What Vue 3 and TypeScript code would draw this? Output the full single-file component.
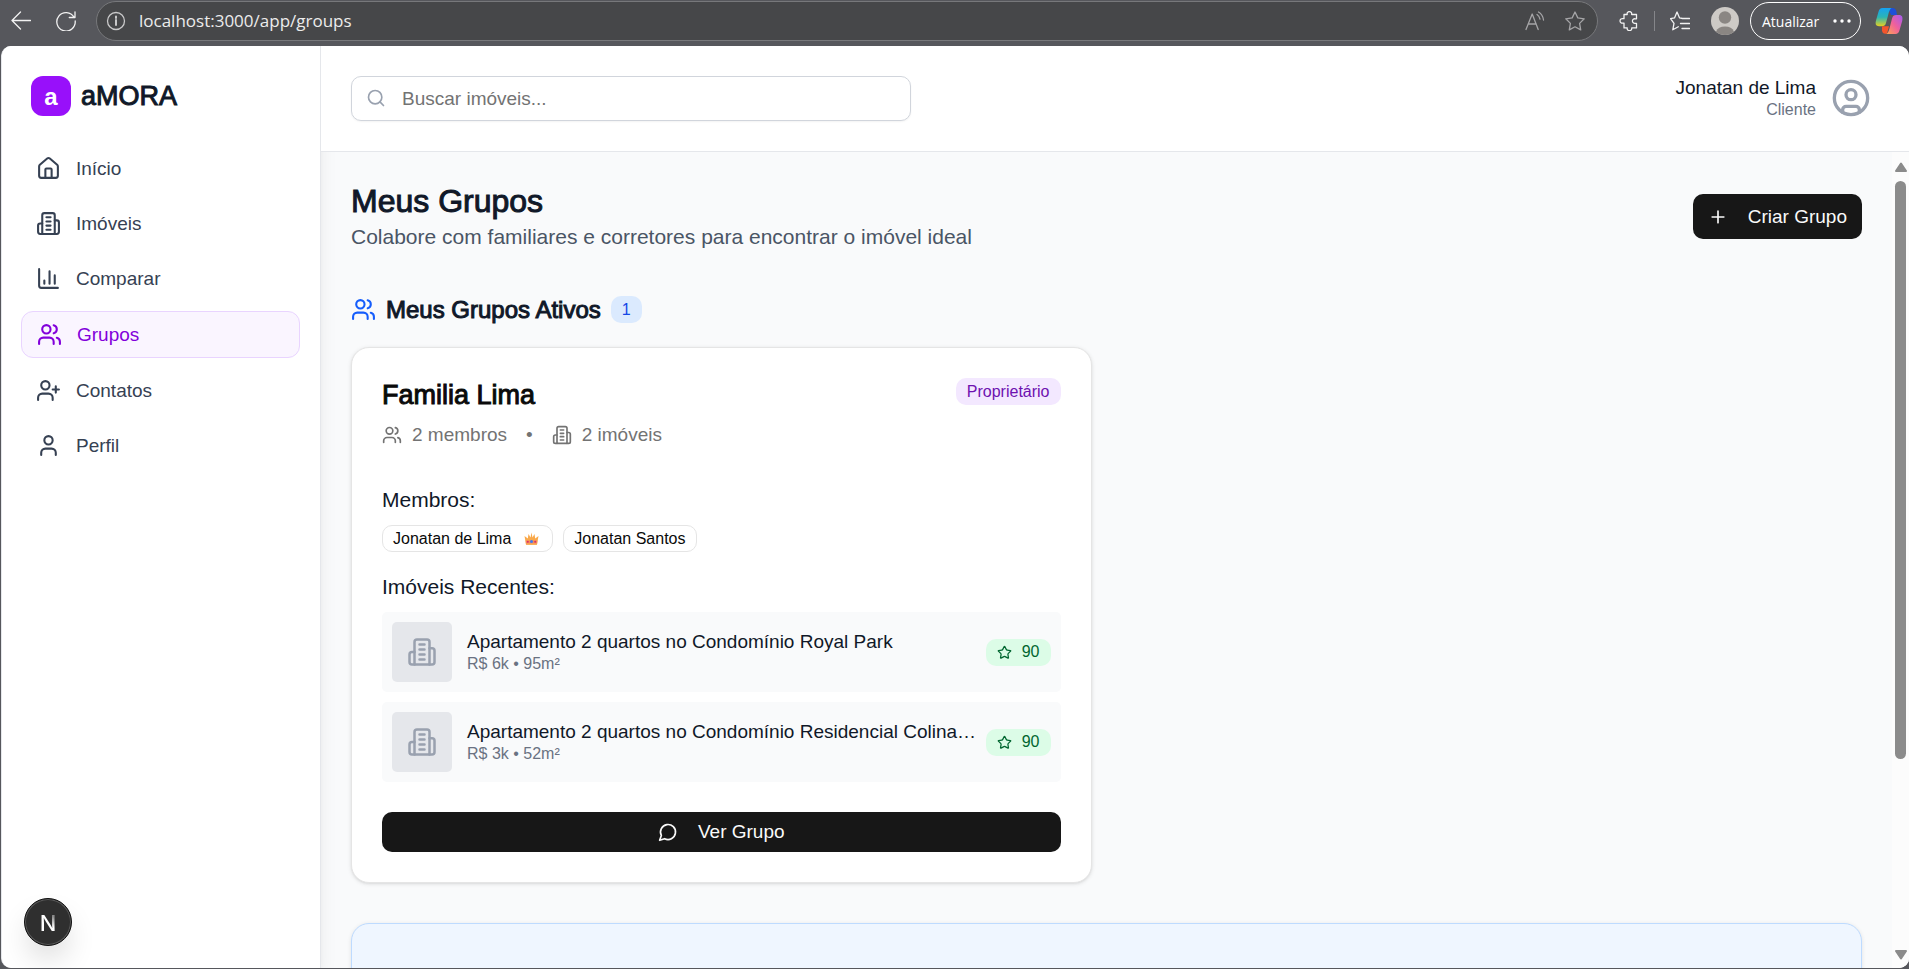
<script setup lang="ts">
import { ref, h, type FunctionalComponent } from 'vue'

type IconName =
  | 'house' | 'building' | 'chart' | 'users' | 'userPlus' | 'user'
  | 'search' | 'circleUser' | 'plus' | 'star' | 'message'

const shapes: Record<IconName, string[]> = {
  house: [
    'M15 21v-8a1 1 0 0 0-1-1h-4a1 1 0 0 0-1 1v8',
    'M3 10a2 2 0 0 1 .709-1.528l7-5.999a2 2 0 0 1 2.582 0l7 5.999A2 2 0 0 1 21 10v9a2 2 0 0 1-2 2H5a2 2 0 0 1-2-2z',
  ],
  building: [
    'M6 22V4a2 2 0 0 1 2-2h8a2 2 0 0 1 2 2v18Z',
    'M6 12H4a2 2 0 0 0-2 2v6a2 2 0 0 0 2 2h2',
    'M18 9h2a2 2 0 0 1 2 2v9a2 2 0 0 1-2 2h-2',
    'M10 6h4M10 10h4M10 14h4M10 18h4',
  ],
  chart: ['M3 3v16a2 2 0 0 0 2 2h16', 'M18 17V9M13 17V5M8 17v-3'],
  users: [
    'M16 21v-2a4 4 0 0 0-4-4H6a4 4 0 0 0-4 4v2',
    'M5 7a4 4 0 1 0 8 0a4 4 0 1 0-8 0',
    'M22 21v-2a4 4 0 0 0-3-3.87',
    'M16 3.13a4 4 0 0 1 0 7.75',
  ],
  userPlus: [
    'M16 21v-2a4 4 0 0 0-4-4H6a4 4 0 0 0-4 4v2',
    'M5 7a4 4 0 1 0 8 0a4 4 0 1 0-8 0',
    'M19 8v6M22 11h-6',
  ],
  user: [
    'M19 21v-2a4 4 0 0 0-4-4H9a4 4 0 0 0-4 4v2',
    'M8 7a4 4 0 1 0 8 0a4 4 0 1 0-8 0',
  ],
  search: ['M3 11a8 8 0 1 0 16 0a8 8 0 1 0-16 0', 'm21 21-4.3-4.3'],
  circleUser: [
    'M2 12a10 10 0 1 0 20 0a10 10 0 1 0-20 0',
    'M9 10a3 3 0 1 0 6 0a3 3 0 1 0-6 0',
    'M7 20.662V19a2 2 0 0 1 2-2h6a2 2 0 0 1 2 2v1.662',
  ],
  plus: ['M5 12h14M12 5v14'],
  star: [
    'M11.525 2.295a.53.53 0 0 1 .95 0l2.31 4.679a2.12 2.12 0 0 0 1.595 1.16l5.166.756a.53.53 0 0 1 .294.904l-3.736 3.638a2.12 2.12 0 0 0-.611 1.878l.882 5.14a.53.53 0 0 1-.771.56l-4.618-2.428a2.12 2.12 0 0 0-1.973 0L6.396 21.01a.53.53 0 0 1-.77-.56l.881-5.139a2.12 2.12 0 0 0-.611-1.879L2.16 9.795a.53.53 0 0 1 .294-.906l5.165-.755a2.12 2.12 0 0 0 1.597-1.16z',
  ],
  message: ['M7.9 20A9 9 0 1 0 4 16.1L2 22Z'],
}

const Icon: FunctionalComponent<{ name: IconName }> = (props) =>
  h(
    'svg',
    {
      viewBox: '0 0 24 24',
      fill: 'none',
      stroke: 'currentColor',
      'stroke-width': 2,
      'stroke-linecap': 'round',
      'stroke-linejoin': 'round',
      'aria-hidden': 'true',
    },
    shapes[props.name].map((d) => h('path', { d })),
  )
Icon.props = ['name']

const address = ref('localhost:3000/app/groups')
const query = ref('')

const nav: { label: string; icon: IconName; active?: boolean }[] = [
  { label: 'Início', icon: 'house' },
  { label: 'Imóveis', icon: 'building' },
  { label: 'Comparar', icon: 'chart' },
  { label: 'Grupos', icon: 'users', active: true },
  { label: 'Contatos', icon: 'userPlus' },
  { label: 'Perfil', icon: 'user' },
]

const members = [
  { name: 'Jonatan de Lima', owner: true },
  { name: 'Jonatan Santos', owner: false },
]

const properties = [
  { title: 'Apartamento 2 quartos no Condomínio Royal Park', detail: 'R$ 6k • 95m²', score: 90 },
  { title: 'Apartamento 2 quartos no Condomínio Residencial Colina…', detail: 'R$ 3k • 52m²', score: 90 },
]
</script>

<template>
  <div class="window">
    <div class="toolbar">
      <button class="tool back" aria-label="Voltar">
        <svg viewBox="0 0 20 20" class="glyph"><path d="M19.500 9.500H1M9.500 1L1 9.500l8.500 8.500" /></svg>
      </button>
      <button class="tool reload" aria-label="Atualizar página">
        <svg viewBox="0 0 20 20" class="glyph"><path d="M18 6.200A9.200 9.200 0 1 0 19.200 10M19 .8v5.700h-5.700" /></svg>
      </button>
      <div class="address">
        <svg viewBox="0 0 20 20" class="glyph info"><circle cx="10" cy="10" r="8.500" /><path d="M10 9v5M10 5.500v1.500" stroke-width="2" /></svg>
        <input v-model="address" class="url" aria-label="Endereço" />
        <button class="tool dim" aria-label="Ler em voz alta">
          <svg viewBox="0 0 20 20" class="glyph"><path d="M1 18.500L7.200 3l6 15.500M3.200 13h8M12 3.500q2.500 1.700 3 4.700M13.500 1q4.300 2.500 5 8" /></svg>
        </button>
        <button class="tool dim bookmark" aria-label="Favoritar">
          <svg viewBox="0 0 20 20" class="glyph"><path d="M10 1l2.800 5.900 6.400.9-4.600 4.600 1.100 6.500L10 15.800l-5.700 3.100 1.100-6.500L.8 7.800l6.400-.9z" /></svg>
        </button>
      </div>
      <button class="tool extensions" aria-label="Extensões">
        <svg viewBox="0 0 20 20" class="glyph"><path d="M5 3.500h3.200a2.300 2.300 0 1 1 4.400 0H17.500v4.300h-1.300a2.300 2.300 0 1 0 0 4.500h1.300v4.600h-4.800a2.300 2.300 0 1 1-4.500 0H5v-4.800H4a2.300 2.300 0 1 1 0-4.400h1z" /></svg>
      </button>
      <span class="divider"></span>
      <button class="tool" aria-label="Favoritos">
        <svg viewBox="0 0 20 20" class="glyph"><path d="M12.500 7.500L9.600 6.900 7 1 4.500 6.900l-4 .7 3.500 4.800-1.200 6.400 5.500-3M12 7.500h7.500M10.500 12.500h9M12 17.500h7.500" /></svg>
      </button>
      <button class="profile" aria-label="Perfil do navegador">
        <svg viewBox="0 0 28 28"><circle cx="14" cy="14" r="14" fill="#cdcac6" /><circle cx="14" cy="10.500" r="6.200" fill="#8a8683" /><path d="M5 24.700a9.500 7.500 0 0 1 18 0A14 14 0 0 1 5 24.700z" fill="#8a8683" /></svg>
      </button>
      <button class="update"><span>Atualizar</span><svg viewBox="0 0 18 4"><circle cx="2" cy="2" r="1.700" /><circle cx="9" cy="2" r="1.700" /><circle cx="16" cy="2" r="1.700" /></svg></button>
      <button class="copilot" aria-label="Copilot">
        <svg viewBox="0 0 28 28">
          <defs>
            <linearGradient id="cpA" x1="0" y1="0" x2="0" y2="1"><stop offset="0" stop-color="#16a2f2" /><stop offset=".5" stop-color="#2bb5b5" /><stop offset="1" stop-color="#e6d020" /></linearGradient>
            <linearGradient id="cpB" x1="1" y1="0" x2="0" y2="1"><stop offset="0" stop-color="#a35cf2" /><stop offset=".5" stop-color="#f0609c" /><stop offset="1" stop-color="#ffa552" /></linearGradient>
          </defs>
          <path d="M13 1h5q2.500 0 3.300 2.800L22 8h-6z" fill="#1c50d8" />
          <path d="M7.500 1h9c-2 1.200-2.600 4-3.600 8l-2 7.200c-.7 2.300-1.800 3-4 3H4C.8 19.200.1 17 1 13.500L3.500 4.700C4.300 2.200 5.300 1 7.500 1z" fill="url(#cpA)" />
          <path d="M7 19.200h7l-2 7.600h-1.800c-2 0-2.700-1-3.200-3z" fill="#f4552c" />
          <path d="M20.500 27h-9c2-1.200 2.600-4 3.600-8l2-7.700c.7-2.300 1.800-3.300 4-3.300H24c3.200 0 4 2.300 3.200 6l-2.700 9.300c-.8 2.500-1.800 3.700-4 3.700z" fill="url(#cpB)" />
        </svg>
      </button>
    </div>

    <div class="page">
      <aside class="sidebar">
        <a href="#" class="brand"><span class="mark">a</span><span class="wordmark">aMORA</span></a>
        <nav class="nav">
          <a v-for="item in nav" :key="item.label" href="#" class="nav-item" :class="{ active: item.active }">
            <Icon :name="item.icon" class="icon-lg" />{{ item.label }}
          </a>
        </nav>
        <button class="dev" aria-label="Ferramentas de desenvolvimento"><span>N</span></button>
      </aside>

      <div class="content">
        <header class="topbar">
          <div class="search">
            <Icon name="search" class="icon-md search-icon" />
            <input v-model="query" type="text" placeholder="Buscar imóveis..." aria-label="Buscar imóveis" />
          </div>
          <div class="account">
            <div class="who">
              <span class="who-name">Jonatan de Lima</span>
              <span class="who-role">Cliente</span>
            </div>
            <Icon name="circleUser" class="avatar" />
          </div>
        </header>

        <div class="scroller">
          <main class="main">
            <div class="heading">
              <div>
                <h1>Meus Grupos</h1>
                <p>Colabore com familiares e corretores para encontrar o imóvel ideal</p>
              </div>
              <button class="primary create"><Icon name="plus" class="icon-md" />Criar Grupo</button>
            </div>

            <div class="section-title">
              <Icon name="users" class="icon-lg" />
              <h2>Meus Grupos Ativos</h2>
              <span class="badge blue">1</span>
            </div>

            <div class="cards">
              <article class="card">
                <div class="card-head">
                  <h3>Familia Lima</h3>
                  <span class="badge purple">Proprietário</span>
                </div>
                <div class="meta">
                  <Icon name="users" class="icon-md" /><span>2 membros</span>
                  <span class="dot">•</span>
                  <Icon name="building" class="icon-md" /><span>2 imóveis</span>
                </div>

                <h4>Membros:</h4>
                <div class="members">
                  <span v-for="m in members" :key="m.name" class="badge outline">
                    {{ m.name }}
                    <svg v-if="m.owner" viewBox="0 0 15 15" class="crown" role="img" aria-label="Proprietário">
                      <path d="M2 13.500L.5 5l3.300 2.500L4.500 3l2 3.500L7.500 1.500l1 5 2-3.500.7 4.500L14.500 5 13 13.500z" fill="#f9a94b" />
                      <path d="M2 13.500L1.700 9.500h11.600L13 13.500z" fill="#f4895a" />
                      <path d="M2.200 12.500h10.600v1.500H2.200z" fill="#f9b15c" />
                      <circle cx="7.500" cy="10.500" r="1.500" fill="#3d7cf0" /><circle cx="3.800" cy="10.700" r="1" fill="#d92f6b" /><circle cx="11.200" cy="10.700" r="1" fill="#d92f6b" />
                    </svg>
                  </span>
                </div>

                <h4>Imóveis Recentes:</h4>
                <ul class="properties">
                  <li v-for="p in properties" :key="p.title">
                    <span class="thumb"><Icon name="building" /></span>
                    <div class="property">
                      <span class="property-name">{{ p.title }}</span>
                      <span class="property-detail">{{ p.detail }}</span>
                    </div>
                    <span class="badge green"><Icon name="star" class="icon-sm" />{{ p.score }}</span>
                  </li>
                </ul>

                <button class="primary view"><Icon name="message" class="icon-md" />Ver Grupo</button>
              </article>
            </div>

            <section class="notice"></section>
          </main>

          <div class="scrollbar" aria-hidden="true">
            <svg viewBox="0 0 12 10"><path d="M6 1.500L11 9H1z" /></svg>
            <div class="track"><div class="thumb-bar"></div></div>
            <svg viewBox="0 0 12 10"><path d="M6 8.500L11 1H1z" /></svg>
          </div>
        </div>
      </div>
    </div>
  </div>
</template>

<style>
body {
  margin: 0;
  overflow: hidden;
}
</style>

<style scoped>
* {
  box-sizing: border-box;
}
.window {
  display: flex;
  flex-direction: column;
  height: 100vh;
  background: #56575c;
  font-family: "Liberation Sans", Arial, sans-serif;
  font-size: 19px;
  color: #101828;
}
button,
input {
  font: inherit;
  color: inherit;
}
button {
  padding: 0;
  border: 0;
  background: none;
}
svg {
  display: block;
  flex: none;
}
h1, h2, h3, h4, p, ul {
  margin: 0;
  padding: 0;
  font-weight: 400;
}
a {
  color: inherit;
  text-decoration: none;
}

/* Browser toolbar */
.toolbar {
  display: flex;
  flex: none;
  align-items: center;
  height: 46px;
  padding: 0 6px 4px 11px;
  color: #fff;
  font-family: "Open Sans", "Noto Sans", sans-serif;
}
.tool {
  flex: none;
  width: 20px;
  height: 20px;
}
.glyph {
  width: 20px;
  height: 20px;
  fill: none;
  stroke: #f2f2f2;
  stroke-width: 1.3;
  stroke-linecap: round;
  stroke-linejoin: round;
}
.reload {
  margin: 0 20px 0 25px;
}
.address {
  display: flex;
  flex: 1;
  align-items: center;
  min-width: 0;
  height: 40px;
  padding: 0 12px 0 9px;
  border: 1px solid #77787b;
  border-radius: 20px;
  background: #464749;
}
.info {
  stroke: #c9c9ca;
}
.url {
  flex: 1;
  min-width: 0;
  padding: 0 0 0 13px;
  border: 0;
  outline: 0;
  background: none;
  color: #ececec;
  font-size: 17px;
  line-height: 24px;
}
.dim .glyph {
  stroke: #a5a5a7;
}
.bookmark {
  margin-left: 20px;
}
.extensions {
  margin-left: 21px;
}
.divider {
  width: 1px;
  height: 20px;
  margin: 0 15px;
  background: #85868a;
}
.profile {
  width: 28px;
  height: 28px;
  margin: 0 11px 0 21px;
}
.update {
  display: flex;
  align-items: center;
  justify-content: space-between;
  width: 111px;
  height: 38px;
  padding: 0 9px 0 11px;
  border: 1px solid #fff;
  border-radius: 19px;
  font-size: 14px;
}
.update svg {
  width: 18px;
  height: 4px;
  fill: #fff;
}
.copilot {
  width: 28px;
  height: 28px;
  margin-left: 14px;
}

/* Application shell */
.page {
  display: flex;
  flex: 1;
  min-height: 0;
  margin: 0 0 1px 1px;
  border-left: 1px solid #e5e7eb;
  border-radius: 10px;
  background: #fff;
  overflow: hidden;
}
.sidebar {
  position: relative;
  z-index: 1;
  flex: none;
  width: 319px;
  padding: 30px 20px 0 19px;
  border-right: 1px solid #e5e7eb;
  background: #fff;
  box-shadow: 0 12px 19px -4px rgba(0, 0, 0, 0.1), 0 5px 8px -5px rgba(0, 0, 0, 0.1);
}
.brand {
  display: flex;
  align-items: center;
  gap: 10px;
  padding-left: 10px;
}
.mark {
  width: 40px;
  height: 40px;
  border-radius: 12px;
  background: #9810fa;
  color: #fff;
  font-size: 24px;
  font-weight: 700;
  line-height: 42px;
  text-align: center;
}
.wordmark {
  font-size: 27px;
  line-height: 36px;
  -webkit-text-stroke: 1px currentColor;
}
.nav {
  display: flex;
  flex-direction: column;
  gap: 10px;
  margin-top: 30px;
}
.nav-item {
  display: flex;
  align-items: center;
  gap: 15px;
  padding: 10px 15px;
  border-radius: 12px;
  color: #364153;
  line-height: 25px;
}
.nav-item.active {
  border: 1px solid #e9d4ff;
  background: #faf5ff;
  color: #8200db;
}
.icon-lg {
  width: 25px;
  height: 25px;
}
.icon-md {
  width: 20px;
  height: 20px;
}
.icon-sm {
  width: 15px;
  height: 15px;
}
.dev {
  position: absolute;
  bottom: 22px;
  left: 22px;
  width: 48px;
  height: 48px;
  border: 1px solid #111;
  border-radius: 50%;
  background: #2f2f2f;
  box-shadow: inset 0 0 0 1px #5a5a5a, 0 16px 32px -8px rgba(0, 0, 0, 0.24);
  font-family: Inter, sans-serif;
  font-size: 22px;
  font-weight: 500;
  line-height: 48px;
  text-align: center;
}
.dev span {
  background: linear-gradient(60deg, #fff 60%, #8a8a8a 80%);
  background-clip: text;
  color: transparent;
}
.content {
  display: flex;
  flex: 1;
  flex-direction: column;
  min-width: 0;
}
.topbar {
  position: relative;
  z-index: 2;
  display: flex;
  flex: none;
  align-items: flex-start;
  justify-content: space-between;
  padding: 30px 38px 30px 30px;
  border-bottom: 1px solid #e5e7eb;
  background: #fff;
}
.search {
  position: relative;
  width: 560px;
}
.search-icon {
  position: absolute;
  top: 12px;
  left: 15px;
  color: #99a1af;
}
.search input {
  display: block;
  width: 100%;
  height: 45px;
  padding: 0 15px 0 50px;
  border: 1px solid #d1d5dc;
  border-radius: 10px;
  outline: 0;
  background: #fff;
  box-shadow: 0 1px 2px rgba(0, 0, 0, 0.05);
}
.search input::placeholder {
  color: #737373;
  opacity: 1;
}
.account {
  display: flex;
  align-items: center;
  gap: 15px;
}
.who {
  display: flex;
  flex-direction: column;
  align-items: flex-end;
}
.who-name,
.property-name {
  line-height: 24px;
}
.who-role,
.property-detail {
  color: #6a7282;
  font-size: 16px;
  line-height: 20px;
}
.avatar {
  width: 40px;
  height: 40px;
  color: #99a1af;
}

/* Groups page */
.scroller {
  display: flex;
  flex: 1;
  min-height: 0;
  background: #f9fafb;
}
.main {
  flex: 1;
  min-width: 0;
  padding: 29px 30px 0;
  overflow: hidden;
}
.heading {
  display: flex;
  align-items: center;
  justify-content: space-between;
}
h1 {
  font-size: 32px;
  line-height: 40px;
  -webkit-text-stroke: 1px currentColor;
}
.heading p {
  color: #4a5565;
  font-size: 21px;
  line-height: 31px;
}
.primary {
  display: flex;
  align-items: center;
  justify-content: center;
  gap: 20px;
  border-radius: 10px;
  background: #171717;
  color: #fafafa;
}
.create {
  height: 45px;
  padding: 0 15px;
}
.section-title {
  display: flex;
  align-items: center;
  gap: 10px;
  margin-top: 40px;
  line-height: 35px;
}
.section-title .icon-lg {
  color: #155dfc;
}
h2 {
  font-size: 24px;
  -webkit-text-stroke: 1px currentColor;
}
.badge {
  display: inline-flex;
  align-items: center;
  gap: 10px;
  height: 27px;
  padding: 0 11px;
  border-radius: 10px;
  font-size: 16px;
  line-height: 24px;
  white-space: nowrap;
}
.blue {
  background: #dbeafe;
  color: #1447e6;
}
.purple {
  background: #f3e8ff;
  color: #6e11b0;
}
.green {
  background: #dcfce7;
  color: #016630;
}
.outline {
  padding: 0 10px;
  border: 1px solid #e5e5e5;
  color: #0a0a0a;
}
.crown {
  width: 15px;
  height: 15px;
  margin: 0 3px;
}
.cards {
  display: grid;
  grid-template-columns: 1fr 1fr;
  gap: 30px;
  margin-top: 20px;
}
.card {
  min-width: 0;
  padding: 30px;
  border: 1px solid #e5e5e5;
  border-radius: 18px;
  background: #fff;
  box-shadow: 0 1px 4px rgba(0, 0, 0, 0.1), 0 1px 3px -1px rgba(0, 0, 0, 0.1);
}
.card-head {
  display: flex;
  align-items: flex-start;
  justify-content: space-between;
}
h3 {
  color: #0a0a0a;
  font-size: 27px;
  line-height: 34px;
  -webkit-text-stroke: 1px currentColor;
}
.meta {
  display: flex;
  align-items: center;
  gap: 10px;
  margin: 10px 0 37px;
  color: #737373;
  line-height: 26px;
}
.dot {
  margin: 0 9px;
}
h4 {
  margin-bottom: 10px;
  font-size: 21px;
  line-height: 30px;
}
.members {
  display: flex;
  flex-wrap: wrap;
  gap: 10px;
  margin-bottom: 20px;
}
.properties {
  display: flex;
  flex-direction: column;
  gap: 10px;
  list-style: none;
}
.properties li {
  display: flex;
  align-items: center;
  gap: 10px;
  padding: 10px;
  border-radius: 5px;
  background: #f9fafb;
}
.thumb {
  display: grid;
  flex: none;
  place-items: center;
  width: 60px;
  height: 60px;
  margin-right: 5px;
  border-radius: 5px;
  background: #e5e7eb;
  color: #99a1af;
}
.thumb svg {
  width: 30px;
  height: 30px;
}
.property {
  display: flex;
  flex: 1;
  flex-direction: column;
  min-width: 0;
}
.property-name {
  white-space: nowrap;
}
.view {
  width: 100%;
  height: 40px;
  margin-top: 30px;
}
.notice {
  height: 300px;
  margin-top: 40px;
  border: 1px solid #bedbff;
  border-radius: 18px;
  background: #eff6ff;
  box-shadow: 0 1px 4px rgba(0, 0, 0, 0.1);
}
.scrollbar {
  display: flex;
  flex: none;
  flex-direction: column;
  align-items: center;
  gap: 9px;
  width: 17px;
  padding: 10px 0 8px;
  background: #fcfcfc;
}
.scrollbar svg {
  width: 12px;
  height: 10px;
  fill: #8b8b8b;
  stroke: #8b8b8b;
  stroke-width: 2;
  stroke-linejoin: round;
}
.track {
  flex: 1;
  width: 11px;
}
.thumb-bar {
  height: 76%;
  border-radius: 6px;
  background: #8b8b8b;
}
</style>
